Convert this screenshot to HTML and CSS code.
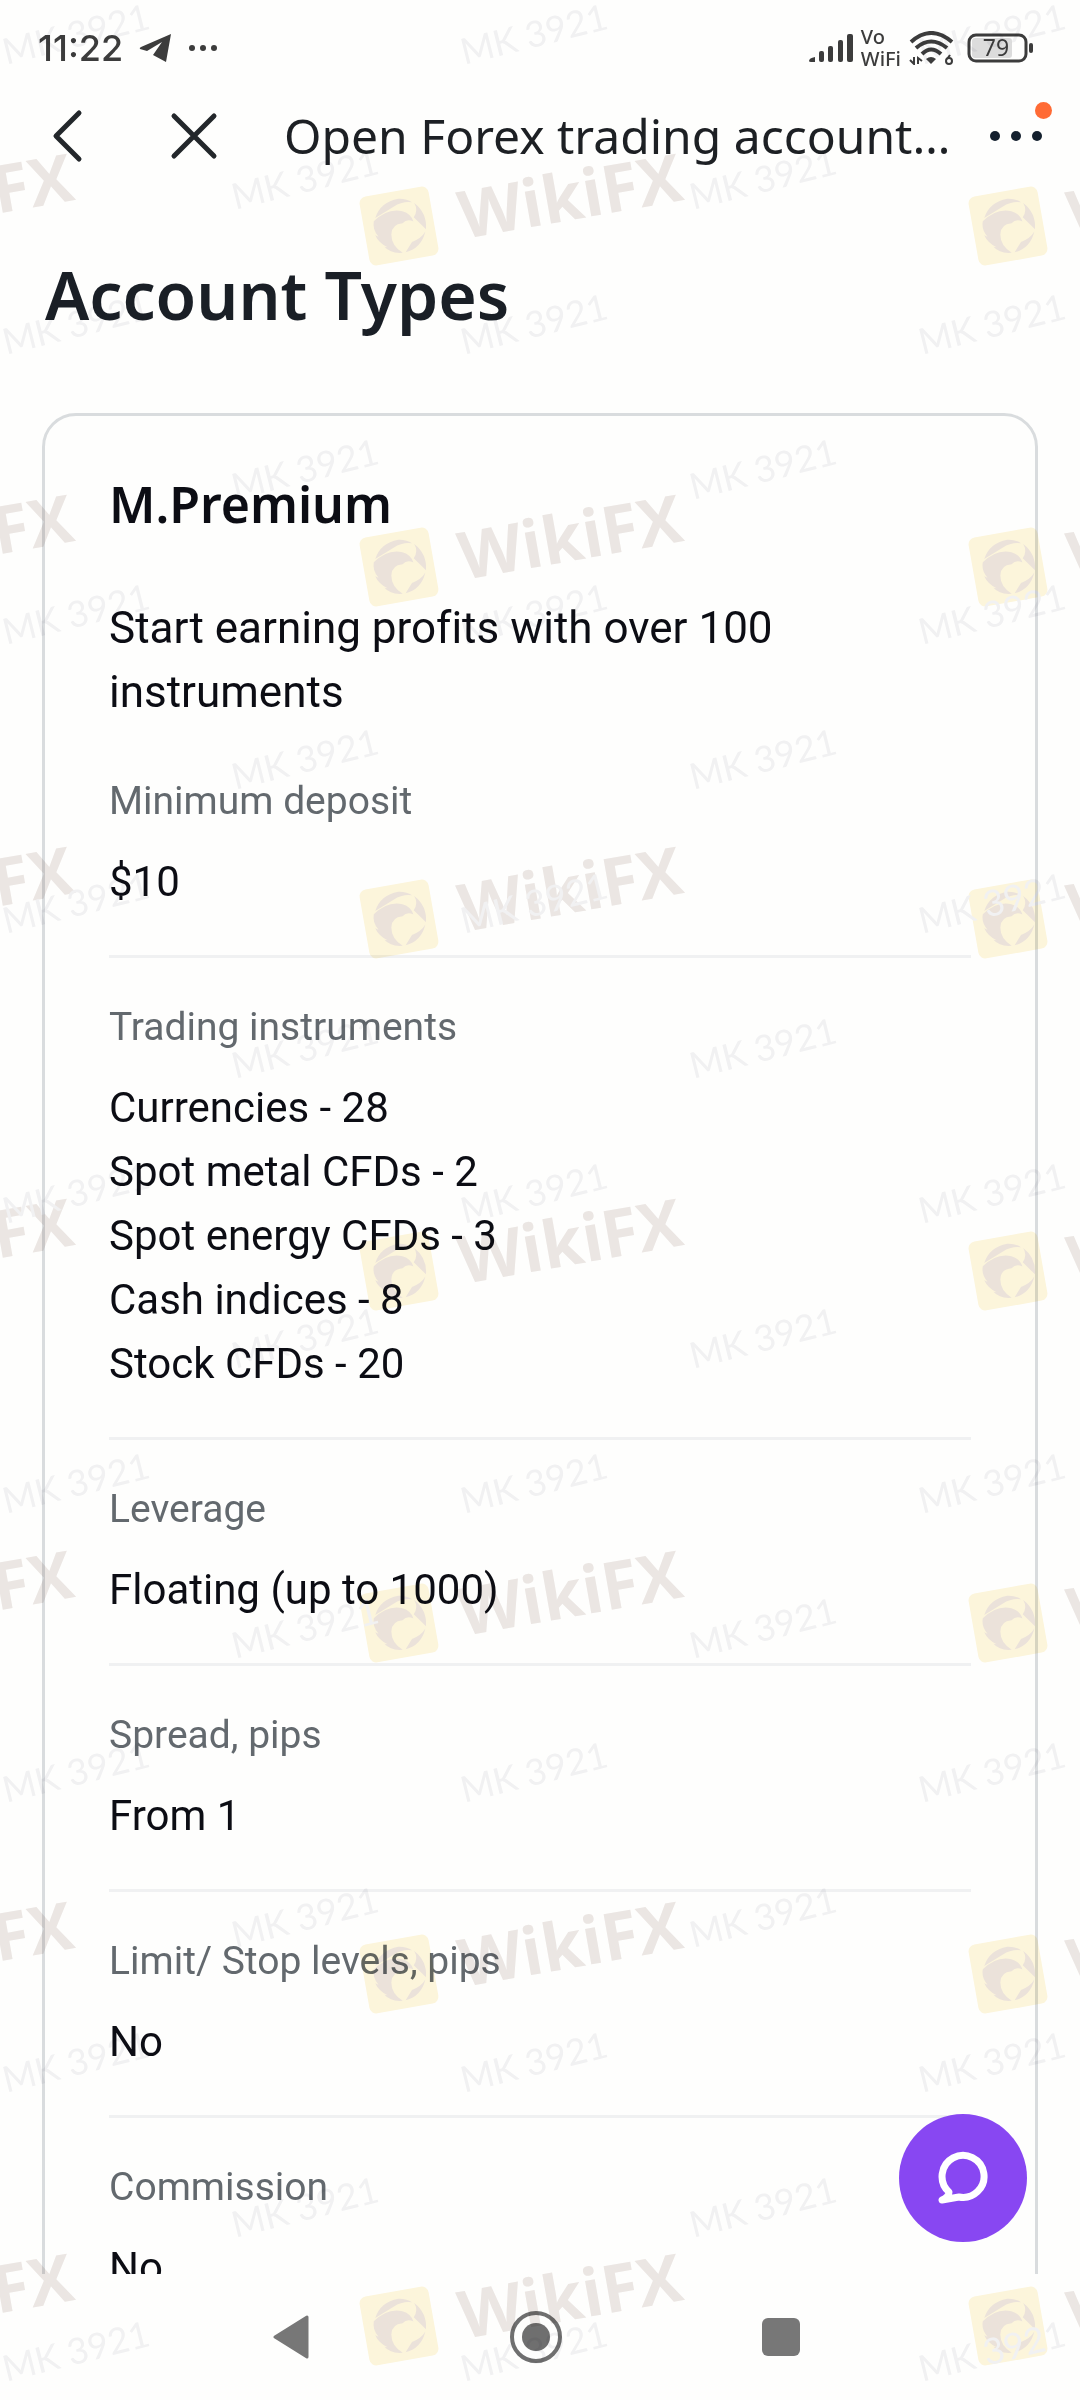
FILE: index.html
```html
<!DOCTYPE html>
<html lang="en">
<head>
<meta charset="utf-8">
<meta name="viewport" content="width=device-width, initial-scale=1">
<title>Open Forex trading account</title>
<link rel="stylesheet" href="styles.css">
</head>
<body>
<div class="screen">
  <div class="status">
    <div class="status-left">
      <span class="time">11:22</span>
      <svg width="33" height="30" viewBox="0 0 33 30" fill="#3c3c3c" aria-hidden="true"><path d="M32 1 L27 29 L14 22 L23 9 L8 18 L1 16 Q0 15 2 14 Z"/></svg>
      <svg width="30" height="8" viewBox="0 0 30 8" fill="#3c3c3c" aria-hidden="true"><circle cx="4" cy="4" r="3"/><circle cx="15" cy="4" r="3"/><circle cx="26" cy="4" r="3"/></svg>
    </div>
    <div class="status-right">
      <svg width="44" height="30" viewBox="0 0 44 30" fill="#3c3c3c" aria-hidden="true"><path d="M0 28 Q0 25 6 24 V29 H2 Q0 29 0 28Z"/><rect x="10" y="18" width="5" height="11" rx="2"/><rect x="19" y="13" width="5" height="16" rx="2"/><rect x="29" y="7" width="5" height="22" rx="2"/><rect x="38" y="1" width="6" height="28" rx="2"/></svg>
      <span class="vowifi"><span>Vo</span><span>WiFi</span></span>
      <svg width="46" height="34" viewBox="0 0 46 34" fill="none" stroke="#3c3c3c" stroke-width="4" aria-hidden="true"><path d="M2 11 Q22 -7 43 11"/><path d="M7 17 Q22 4 38 17"/><path d="M13 23 Q22 14 32 23"/><path d="M17 28 Q22 24 27 28 L22 33 Z" fill="#3c3c3c" stroke="none"/><path d="M5 26 V33 L1 29 M9 33 V27 L13 30" stroke-width="2"/><path d="M41 24 L38 28" stroke-width="2"/><circle cx="40" cy="30" r="3" stroke-width="2"/></svg>
      <svg class="battery" width="67" height="30" viewBox="0 0 67 30" aria-hidden="true"><rect x="5" y="5" width="40" height="20" rx="3" fill="#dcdcdc"/><rect x="2" y="2" width="57" height="26" rx="7" fill="none" stroke="#3c3c3c" stroke-width="3"/><rect x="62" y="10" width="4" height="10" rx="2" fill="#3c3c3c"/><text x="29" y="23" text-anchor="middle">79</text></svg>
    </div>
  </div>

  <header class="topbar">
    <button class="icon-btn" aria-label="Back"><svg width="60" height="60" viewBox="0 0 60 60" fill="none" stroke="#23272b" stroke-width="5" stroke-linecap="round" stroke-linejoin="round"><path d="M43 7 L20 30 L43 53"/></svg></button>
    <button class="icon-btn" aria-label="Close"><svg width="60" height="60" viewBox="0 0 60 60" fill="none" stroke="#23272b" stroke-width="5" stroke-linecap="round"><path d="M10 10 L50 50 M50 10 L10 50"/></svg></button>
    <p class="page-title">Open Forex trading account…</p>
    <button class="icon-btn more" aria-label="More"><svg width="60" height="60" viewBox="0 0 60 60" fill="#14202e"><circle cx="9" cy="30" r="5"/><circle cx="30" cy="30" r="5"/><circle cx="51" cy="30" r="5"/></svg><span class="badge"></span></button>
  </header>

  <main class="content">
    <h1>Account Types</h1>
    <section class="card">
      <h2>M.Premium</h2>
      <p class="intro">Start earning profits with over 100<br>instruments</p>
      <dl>
        <div class="item"><dt>Minimum deposit</dt><dd>$10</dd></div>
        <div class="item"><dt>Trading instruments</dt><dd>Currencies - 28<br>Spot metal CFDs - 2<br>Spot energy CFDs - 3<br>Cash indices - 8<br>Stock CFDs - 20</dd></div>
        <div class="item"><dt>Leverage</dt><dd>Floating (up to 1000)</dd></div>
        <div class="item"><dt>Spread, pips</dt><dd>From 1</dd></div>
        <div class="item"><dt>Limit/ Stop levels, pips</dt><dd>No</dd></div>
        <div class="item"><dt>Commission</dt><dd>No</dd></div>
      </dl>
    </section>
    <button class="chat" aria-label="Chat"><svg width="56" height="56" viewBox="0 0 56 56" fill="none" stroke="#fff" stroke-width="7" stroke-linejoin="round" stroke-linecap="round"><path d="M14 42 A21 21 0 1 1 24 47 L7 50 Q14 47 14 42 Z"/></svg></button>
  </main>

  <nav class="navbar">
    <button aria-label="Back"><svg width="36" height="44" viewBox="0 0 36 44" fill="#777" stroke="#777" stroke-width="3" stroke-linejoin="round"><path d="M34 2 V42 L2 22 Z"/></svg></button>
    <button aria-label="Home"><svg width="54" height="54" viewBox="0 0 54 54"><circle cx="27" cy="27" r="24" fill="none" stroke="#6f6f6f" stroke-width="4"/><circle cx="27" cy="27" r="14" fill="#6f6f6f"/></svg></button>
    <button aria-label="Recent apps"><svg width="38" height="38" viewBox="0 0 38 38"><rect width="38" height="38" rx="6" fill="#777"/></svg></button>
  </nav>

  <svg class="watermark" aria-hidden="true">
    <defs>
      <text id="mk" class="mk" text-anchor="middle" transform="rotate(-14)" y="12">MK 3921</text>
      <g id="band">
        <use href="#mk" transform="translate(76 35)"/>
        <use href="#mk" transform="translate(534 35)"/>
        <use href="#mk" transform="translate(992 35)"/>
        <use href="#mk" transform="translate(305 180)"/>
        <use href="#mk" transform="translate(763 180)"/>
      </g>
      <g id="brand" transform="rotate(-10)">
        <rect x="-35" y="-35" width="70" height="70" rx="7" fill="#fdf6dd"/>
        <g fill="#ece3dc">
          <path d="M-22 -12 Q-14 -27 4 -27 Q12 -26 17 -21 Q8 -24 -2 -20 Z"/>
          <path d="M19 -20 Q30 -8 26 8 L16 -6 Q22 -12 19 -20Z"/>
          <path d="M25 10 Q18 26 2 27 L10 18 Q20 16 25 10Z"/>
          <path d="M-24 -9 Q-8 -20 6 -14 Q14 -10 15 -2 Q9 -6 4 -2 Q-7 -3 -9 7 Q-11 18 -1 27 Q-13 26 -18 18 L-15 19 Q-23 13 -25 5 L-22 7 Q-27 -1 -24 -9Z"/>
        </g>
        <text class="wiki" x="61" y="24">WikiFX</text>
      </g>
      <g id="row">
        <use href="#brand" transform="translate(-210 0)"/>
        <use href="#brand" transform="translate(399 0)"/>
        <use href="#brand" transform="translate(1008 0)"/>
      </g>
    </defs>
    <use href="#row" y="226"/><use href="#row" y="567"/><use href="#row" y="919"/><use href="#row" y="1271"/><use href="#row" y="1623"/><use href="#row" y="1974"/><use href="#row" y="2326"/>
    <use href="#band" y="0"/><use href="#band" y="290"/><use href="#band" y="580"/><use href="#band" y="869"/><use href="#band" y="1159"/><use href="#band" y="1449"/><use href="#band" y="1738"/><use href="#band" y="2028"/><use href="#band" y="2317"/>
  </svg>
</div>
</body>
</html>
```
FILE: styles.css
```css
* { box-sizing: border-box; }

body, h1, h2, p, dl, dd { margin: 0; }

body {
  background: #fefefd;
  color: #0c0d14;
  font-family: Roboto, "Noto Sans", sans-serif;
  font-variant-ligatures: none;
}

button {
  border: 0;
  padding: 0;
  background: none;
  display: flex;
  align-items: center;
  justify-content: center;
}

.screen {
  position: relative;
  display: flex;
  flex-direction: column;
  height: 100vh;
  overflow: hidden;
}

.status {
  display: flex;
  justify-content: space-between;
  align-items: center;
  height: 96px;
  padding: 0 46px 0 38px;
  color: #3c3c3c;
}

.status-left { display: flex; align-items: center; gap: 16px; }
.status-right { display: flex; align-items: center; gap: 8px; }

.time { font: 500 36px/48px Inter, sans-serif; }

.vowifi {
  display: flex;
  flex-direction: column;
  font: 500 20px/22px "Noto Sans", sans-serif;
}

.battery { margin-left: 4px; overflow: visible; }
.battery text { font: 400 23px "Noto Sans", sans-serif; fill: #3c3c3c; }

.topbar {
  display: flex;
  align-items: center;
  height: 80px;
  padding: 0 34px 0 36px;
}

.icon-btn { position: relative; width: 60px; height: 60px; flex: none; }
.icon-btn + .icon-btn { margin-left: 68px; }

.page-title {
  flex: 1;
  margin-left: 60px;
  font: 400 48px/64px "Noto Sans", sans-serif;
  color: #1d2024;
  white-space: nowrap;
}

.badge {
  position: absolute;
  top: -4px;
  right: -6px;
  width: 17px;
  height: 17px;
  border-radius: 50%;
  background: #ff6b35;
}

.content {
  position: relative;
  flex: 1;
  min-height: 0;
  overflow: hidden;
  padding: 78px 42px 0;
}

h1 {
  padding-left: 3px;
  font: 600 66px/80px "Noto Sans", sans-serif;
  color: #1a1f26;
}

.card {
  margin-top: 79px;
  padding: 56px 64px;
  border: 3px solid #d9dcde;
  border-radius: 34px;
}

h2 { font: 600 50px/64px "Noto Sans", sans-serif; }

.intro {
  margin: 60px 0 49px;
  font-size: 44px;
  line-height: 64px;
}

.item {
  padding: 41px 0;
  border-bottom: 3px solid #f0f1f2;
}

.item:first-child { padding-top: 0; }

dt { font-size: 39px; line-height: 56px; color: #63696e; }
dd { margin-top: 21px; font-size: 42px; line-height: 64px; }

.chat {
  position: absolute;
  right: 53px;
  bottom: 32px;
  width: 128px;
  height: 128px;
  border-radius: 50%;
  background: #8847f2;
}

.navbar {
  display: grid;
  grid-template-columns: repeat(3, 1fr);
  height: 126px;
  padding: 0 177px 0 168px;
}

.watermark {
  position: absolute;
  inset: 0;
  width: 100%;
  height: 100%;
  pointer-events: none;
  mix-blend-mode: multiply;
}

.mk { font: 400 36px Lato, sans-serif; fill: #f2f2f4; }

.wiki {
  font: 700 66px "Open Sans", sans-serif;
  fill: #ece7e5;
}
```
